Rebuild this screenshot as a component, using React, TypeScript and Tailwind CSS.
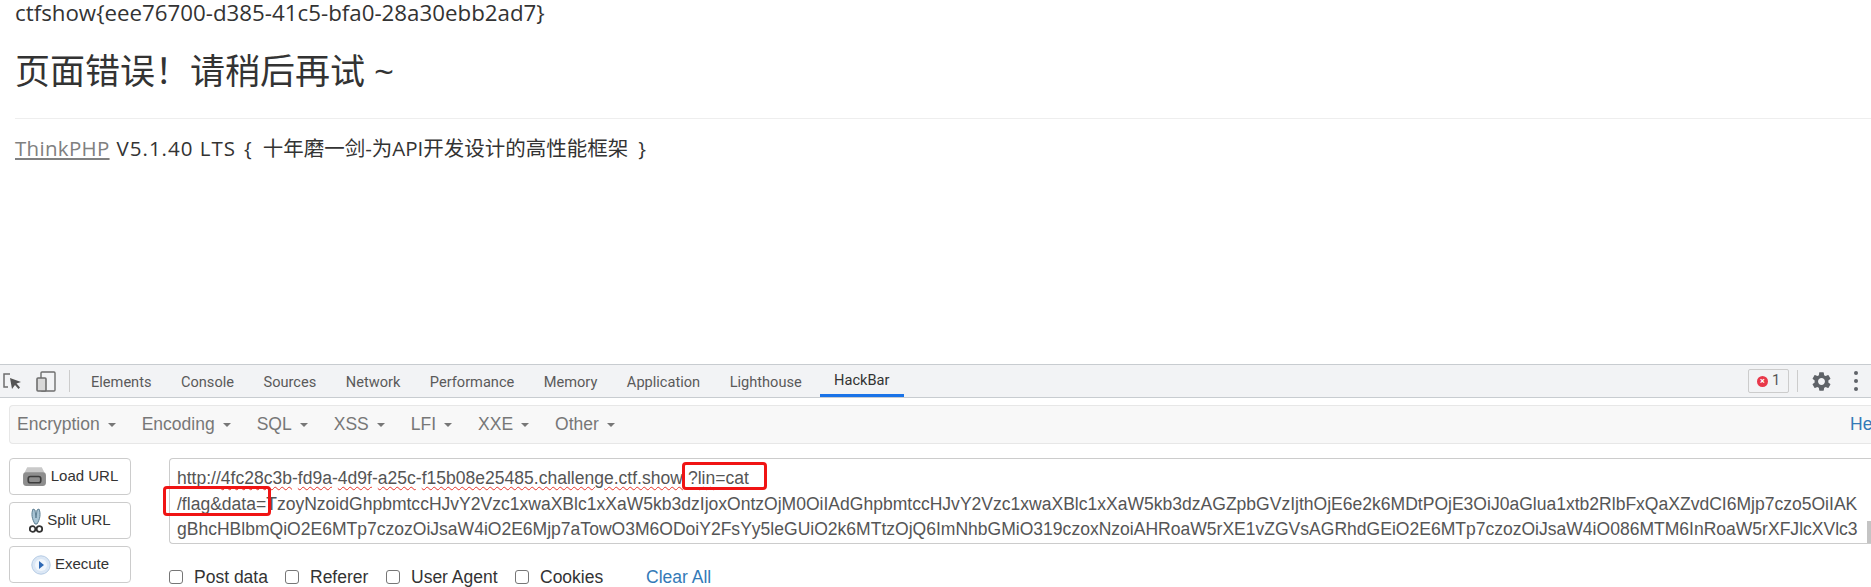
import { MdSettings } from "react-icons/md";

const tabs = ["Elements", "Console", "Sources", "Network", "Performance", "Memory", "Application", "Lighthouse"];
const menus = ["Encryption", "Encoding", "SQL", "XSS", "LFI", "XXE", "Other"];

const Wavy = ({ children }: { children: string }) => (
  <span className="underline decoration-wavy decoration-[#e5342a] decoration-1 underline-offset-2">{children}</span>
);

const LoadIcon = () => (
  <svg width="25" height="21" viewBox="0 0 24 20">
    <path d="M5 1h14l3 6H2z" fill="#c9c9c9" />
    <rect x="1" y="6" width="22" height="13" rx="3" fill="#8e8e8e" />
    <rect x="6" y="10" width="12" height="6" rx="2" fill="none" stroke="#3d3d3d" strokeWidth="1.6" />
  </svg>
);

const ScissorsIcon = () => (
  <svg width="14" height="26" viewBox="0 0 14 26">
    <path d="M4 1c-2 5-1 10 2 15l2 0c3-5 4-10 2-15l-2 1-1 8-1-8z" fill="#a8c4d4" stroke="#5d7f93" strokeWidth="1" />
    <circle cx="3.6" cy="21" r="2.8" fill="none" stroke="#333" strokeWidth="1.8" />
    <circle cx="10.4" cy="21" r="2.8" fill="none" stroke="#333" strokeWidth="1.8" />
  </svg>
);

const PlayIcon = () => (
  <svg width="20" height="20" viewBox="0 0 20 20">
    <circle cx="10" cy="10" r="9.2" fill="#dbe7f5" stroke="#b5cbe4" />
    <circle cx="10" cy="10" r="6" fill="#f1f6fc" />
    <path d="M8 6l5 4-5 4z" fill="#2f69b5" />
  </svg>
);

const SideButton = ({ children, label }: { children: React.ReactNode; label: string }) => (
  <button className="flex h-[37px] w-[122px] items-center justify-center gap-1 rounded-[4px] border border-[#ccc] bg-white text-[15px] text-[#333]">
    {children}
    <span>{label}</span>
  </button>
);

const Check = ({ label, className }: { label: string; className: string }) => (
  <label className={`flex items-center ${className}`}>
    <span className="h-[14px] w-[14px] rounded-[3px] border border-[#767676] bg-white" />
    <span className="ml-[11px]">{label}</span>
  </label>
);

export default function App() {
  return (
    <div className="flex h-[587px] w-[1871px] flex-col overflow-hidden bg-white font-['Liberation_Sans',sans-serif]">
      <div className="h-[364px] shrink-0 pl-[15px] pt-[2px] text-[#333] font-['Open_Sans','Noto_Sans_CJK_SC',sans-serif]">
        <div className="text-[22.3px] leading-[22px]">ctfshow{"{"}eee76700-d385-41c5-bfa0-28a30ebb2ad7{"}"}</div>
        <h1 className="mt-[25px] text-[35px] leading-[44px]">页面错误！请稍后再试 ~</h1>
        <div className="mt-[25px] h-[1px] bg-[#eee]" />
        <div className="mt-[16px] flex items-baseline text-[20.5px] leading-[26px]">
          <a className="tracking-[0.3px] text-[#808080] underline">ThinkPHP</a>
          <span className="ml-[7px] tracking-[1px]">V5.1.40 LTS</span>
          <span className="ml-[8px]">{"{"}</span>
          <span className="ml-[11px]">十年磨一剑-为API开发设计的高性能框架</span>
          <span className="ml-[10px]">{"}"}</span>
        </div>
      </div>

      <div className="flex h-[34px] shrink-0 items-center border-y border-[#c8ccd0] bg-[#f2f3f5] text-[14.6px] text-[#5a5a5a] font-['Roboto',sans-serif]">
        <svg className="ml-[3px]" width="20" height="20" viewBox="0 0 20 20">
          <path d="M7 3H1v13h4" fill="none" stroke="#6e6e6e" strokeWidth="1.5" />
          <path d="M7 7l11 4-4.5 1.5 3.5 4-1.5 1.5-3.5-4L9 18z" fill="#555" />
        </svg>
        <svg className="ml-[13px]" width="20" height="21" viewBox="0 0 20 21">
          <rect x="5" y="1" width="14" height="19" rx="1" fill="none" stroke="#6e6e6e" strokeWidth="1.4" />
          <rect x="1" y="7" width="9" height="13" rx="1" fill="#d8d8d8" stroke="#6e6e6e" strokeWidth="1.6" />
        </svg>
        <div className="ml-[13px] h-[22px] w-px bg-[#ccc]" />
        <div className="ml-[21px] flex items-center gap-[29.5px] pt-[3px]">
          {tabs.map((tab) => (
            <span key={tab}>{tab}</span>
          ))}
        </div>
        <div className="ml-[18px] flex h-full w-[84px] items-center justify-center border-b-[3px] border-[#1a73e8] pt-[3px] text-[#333]">HackBar</div>
        <div className="ml-auto flex items-center">
          <div className="flex h-[24px] w-[41px] items-center justify-center gap-1 rounded-[2px] border border-[#ccc] text-[#555]">
            <span className="flex h-[11px] w-[11px] items-center justify-center rounded-full bg-[#e8384a] text-[9px] leading-none font-bold text-white">×</span>
            <span>1</span>
          </div>
          <div className="ml-[8px] h-[22px] w-[1px] bg-[#ccc]" />
          <MdSettings className="ml-[12px] text-[#5f6368]" size={23} />
          <div className="ml-[21px] mr-[13px] flex flex-col gap-[4px]">
            <span className="h-[4px] w-[4px] rounded-full bg-[#5f6368]" />
            <span className="h-[4px] w-[4px] rounded-full bg-[#5f6368]" />
            <span className="h-[4px] w-[4px] rounded-full bg-[#5f6368]" />
          </div>
        </div>
      </div>

      <div className="mt-[7px] ml-[9px] flex h-[39px] shrink-0 items-center overflow-hidden rounded-l-[4px] border border-r-0 border-[#e7e7e7] bg-[#f8f8f8] pl-[7px] text-[17.5px] text-[#777]">
        {menus.map((menu) => (
          <span key={menu} className="mr-[26px] flex items-center gap-[8px]">
            {menu}
            <span className="h-0 w-0 border-x-[4px] border-t-[4px] border-x-transparent border-t-[#777]" />
          </span>
        ))}
        <span className="ml-auto w-[21px] overflow-hidden text-[#337ab7]">Help</span>
      </div>

      <div className="mt-[14px] ml-[9px] flex">
        <div className="flex w-[122px] shrink-0 flex-col gap-[7px]">
          <SideButton label="Load URL"><LoadIcon /></SideButton>
          <SideButton label="Split URL"><ScissorsIcon /></SideButton>
          <SideButton label="Execute"><PlayIcon /></SideButton>
        </div>
        <div className="ml-[38px] min-w-0 flex-1">
          <div className="relative h-[86px] overflow-hidden rounded-l-[4px] border border-r-0 border-[#ccc] pl-[7px] pt-[7px] text-[17.55px] leading-[25.6px] whitespace-nowrap text-[#555]">
            <div>
              http://<Wavy>4fc28c3b</Wavy>-<Wavy>fd9a</Wavy>-<Wavy>4d9f</Wavy>-<Wavy>a25c</Wavy>-<Wavy>f15b08e25485.challenge.ctf.show</Wavy>
              <span className="ml-[5px]">?</span><Wavy>lin</Wavy>=cat
            </div>
            <div>/flag&amp;data=TzoyNzoidGhpbmtccHJvY2Vzc1xwaXBlc1xXaW5kb3dzIjoxOntzOjM0OiIAdGhpbmtccHJvY2Vzc1xwaXBlc1xXaW5kb3dzAGZpbGVzIjthOjE6e2k6MDtPOjE3OiJ0aGlua1xtb2RlbFxQaXZvdCI6Mjp7czo5OiIAK</div>
            <div>gBhcHBlbmQiO2E6MTp7czozOiJsaW4iO2E6Mjp7aTowO3M6ODoiY2FsYy5leGUiO2k6MTtzOjQ6ImNhbGMiO319czoxNzoiAHRoaW5rXE1vZGVsAGRhdGEiO2E6MTp7czozOiJsaW4iO086MTM6InRoaW5rXFJlcXVlc3</div>
            <div className="absolute right-0 bottom-0 h-[22px] w-[4px] bg-[#c4c4c4]" />
          </div>
          <div className="mt-[22px] flex items-center text-[17.5px] leading-[22px] text-[#333]">
            <Check label="Post data" className="w-[116px]" />
            <Check label="Referer" className="w-[101px]" />
            <Check label="User Agent" className="w-[129px]" />
            <Check label="Cookies" className="w-[131px]" />
            <span className="text-[#337ab7]">Clear All</span>
          </div>
        </div>
      </div>

      {/* red marks drawn over the screenshot */}
      <div className="pointer-events-none absolute left-[682px] top-[462px] h-[28px] w-[85px] rounded-[4px] border-[3px] border-[#f01414]" />
      <div className="pointer-events-none absolute left-[163px] top-[486px] h-[30px] w-[108px] rounded-[4px] border-[3px] border-[#f01414]" />
    </div>
  );
}
